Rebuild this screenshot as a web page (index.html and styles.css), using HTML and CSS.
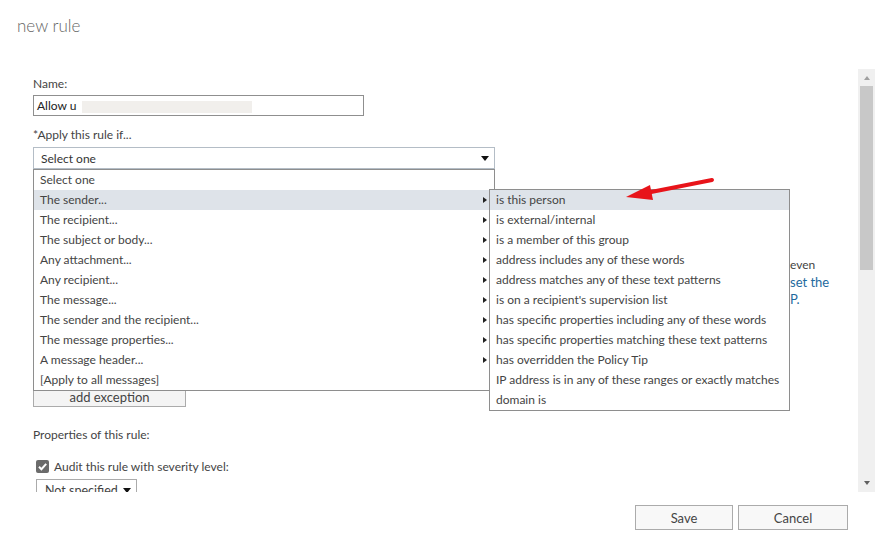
FILE: index.html
```html
<!DOCTYPE html>
<html lang="en">
<head>
<meta charset="utf-8">
<title>new rule</title>
<link rel="stylesheet" href="styles.css">
</head>
<body>
<div class="dialog">
  <h1 class="title">new rule</h1>
  <div class="scrollarea">
    <div class="content">
      <div class="label">Name:</div>
      <div class="textbox">Allow u<span class="redacted"></span></div>
      <div class="label label-apply">*Apply this rule if...</div>
      <div class="select-wrap">
        <div class="select">
          <span>Select one</span>
          <span class="caret"></span>
        </div>
        <ul class="list">
          <li>Select one</li>
          <li class="hl sub">The sender...</li>
          <li class="sub">The recipient...</li>
          <li class="sub">The subject or body...</li>
          <li class="sub">Any attachment...</li>
          <li class="sub">Any recipient...</li>
          <li class="sub">The message...</li>
          <li class="sub">The sender and the recipient...</li>
          <li class="sub">The message properties...</li>
          <li class="sub">A message header...</li>
          <li>[Apply to all messages]</li>
        </ul>
        <ul class="submenu">
          <li class="hl">is this person</li>
          <li>is external/internal</li>
          <li>is a member of this group</li>
          <li>address includes any of these words</li>
          <li>address matches any of these text patterns</li>
          <li>is on a recipient's supervision list</li>
          <li>has specific properties including any of these words</li>
          <li>has specific properties matching these text patterns</li>
          <li>has overridden the Policy Tip</li>
          <li>IP address is in any of these ranges or exactly matches</li>
          <li>domain is</li>
        </ul>
      </div>
      <div class="middle">
        <p class="note"><span class="plain">even</span><br><span class="link">set the</span><br><span class="link">P.</span></p>
      </div>
      <button class="btn-exception" type="button">add exception</button>
      <div class="label label-props">Properties of this rule:</div>
      <label class="check-row">
        <span class="checkbox"><svg width="13" height="13" viewBox="0 0 13 13"><path d="M3 6.8 L5.4 9.2 L10.2 3.8" fill="none" stroke="#fff" stroke-width="2"/></svg></span>
        <span>Audit this rule with severity level:</span>
      </label>
      <div class="small-select"><span>Not specified</span><span class="caret"></span></div>
      <svg class="red-arrow" width="100" height="30" viewBox="0 0 100 30">
        <line x1="88" y1="5" x2="22" y2="18" stroke="#e8141a" stroke-width="4" stroke-linecap="round"/>
        <polygon points="2,22 26,10 29,25" fill="#e8141a"/>
      </svg>
    </div>
    <div class="scrollbar">
      <span class="sb-up"></span>
      <span class="sb-thumb"></span>
      <span class="sb-down"></span>
    </div>
  </div>
  <div class="actions">
    <button class="btn btn-save" type="button">Save</button>
    <button class="btn btn-cancel" type="button">Cancel</button>
  </div>
</div>
</body>
</html>
```

FILE: styles.css
```css
* { box-sizing: border-box; }
html, body { margin: 0; padding: 0; background: #fff; }
body {
  font-family: "Lato", "Open Sans", "Liberation Sans", sans-serif;
  font-size: 12px;
  color: #333;
  width: 876px;
  height: 550px;
  overflow: hidden;
}
.dialog { width: 876px; }
.title {
  margin: 0;
  height: 69px;
  padding: 15px 0 0 17px;
  font-size: 17px;
  font-weight: 300;
  color: #666;
  line-height: 22px;
}
.scrollarea {
  display: flex;
  height: 423px;
  overflow: hidden;
}
.content {
  flex: 1;
  position: relative;
  padding: 7px 0 0 33px;
}
.label { line-height: 16px; color: #444; }
.textbox {
  margin-top: 3px;
  width: 331px;
  height: 21px;
  border: 1px solid #8f8f8f;
  padding: 0 3px;
  line-height: 19px;
  color: #222;
  display: flex;
  align-items: center;
}
.redacted {
  display: inline-block;
  width: 170px;
  height: 12px;
  margin-left: 6px;
  margin-top: 2px;
  background: #f1efec;
}
.label-apply { margin-top: 11px; }
.select-wrap { position: relative; width: 462px; margin-top: 4px; }
.select {
  height: 22px;
  border: 1px solid #b4bdc6;
  padding: 0 5px 0 7px;
  display: flex;
  align-items: center;
  justify-content: space-between;
  color: #333;
}
.caret {
  width: 0; height: 0;
  border-left: 4px solid transparent;
  border-right: 4px solid transparent;
  border-top: 5px solid #111;
}
.list, .submenu {
  list-style: none;
  margin: 0;
  padding: 0;
  position: absolute;
  background: #fff;
  border: 1px solid #8e8e8e;
  z-index: 2;
}
.list { top: 22px; left: 0; width: 462px; }
.list li, .submenu li {
  height: 20px;
  line-height: 20px;
  padding: 0 6px;
  color: #444;
  white-space: nowrap;
  position: relative;
}
.hl { background: #dee3e9; }
.list li.sub::after {
  content: "";
  position: absolute;
  right: 7px;
  top: 7px;
  border-top: 3.5px solid transparent;
  border-bottom: 3.5px solid transparent;
  border-left: 4px solid #222;
}
.submenu { top: 42px; left: 456px; width: 301px; z-index: 3; }
.middle { height: 217px; padding: 88px 0 0 757px; }
.note { margin: 0; line-height: 16.5px; }
.note .plain { font-size: 12px; color: #444; }
.note .link { font-size: 13px; color: #1e6a9e; }
.btn-exception {
  display: block;
  width: 153px;
  height: 21px;
  margin: 0;
  padding: 0;
  border: 1px solid #ababab;
  background: #f4f4f4;
  font: inherit;
  font-size: 13px;
  line-height: 18px;
  color: #444;
}
.label-props { margin-top: 20px; }
.check-row {
  display: flex;
  align-items: center;
  gap: 5px;
  margin-top: 15px;
  margin-left: 3px;
  height: 16px;
  color: #444;
}
.checkbox {
  width: 13px; height: 13px;
  background: #6b6b6b;
  border-radius: 2px;
  display: inline-flex;
}
.small-select {
  margin-top: 5px;
  margin-left: 3px;
  width: 101px;
  height: 22px;
  border: 1px solid #ababab;
  padding: 0 5px 0 8px;
  display: flex;
  align-items: center;
  justify-content: space-between;
  font-size: 12.5px;
  color: #444;
}
.red-arrow { position: absolute; left: 624px; top: 106px; z-index: 4; }
.scrollbar {
  width: 17px;
  margin-right: 1px;
  background: #f0f0f0;
  position: relative;
  display: flex;
  flex-direction: column;
  align-items: center;
}
.sb-up, .sb-down {
  width: 0; height: 0;
  border-left: 3.5px solid transparent;
  border-right: 3.5px solid transparent;
}
.sb-up { margin-top: 7px; border-bottom: 4px solid #a0a0a0; }
.sb-thumb {
  margin-top: 6px;
  width: 13px;
  height: 184px;
  background: #c8c8c8;
}
.sb-down { margin-top: auto; margin-bottom: 7px; border-top: 4px solid #606060; }
.actions {
  display: flex;
  justify-content: flex-end;
  gap: 5px;
  padding: 13px 28px 0 0;
}
.btn {
  height: 25px;
  border: 1px solid #ababab;
  background: #f8f8f8;
  font: inherit;
  font-size: 13px;
  color: #444;
  padding: 0;
}
.btn-save { width: 98px; }
.btn-cancel { width: 110px; }
```
